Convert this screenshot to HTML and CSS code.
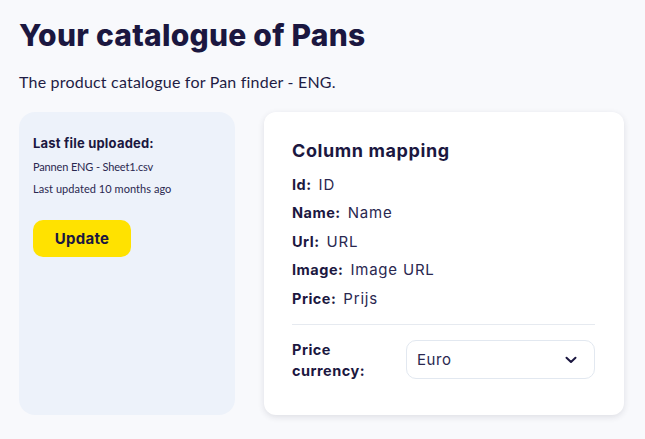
FILE: index.html
```html
<!DOCTYPE html>
<html>
<head>
<meta charset="utf-8">
<link rel="stylesheet" href="styles.css">
</head>
<body>
<main class="page">
  <h1 class="title">Your catalogue of Pans</h1>
  <p class="subtitle">The product catalogue for Pan finder - ENG.</p>
  <div class="cards">
    <section class="upload-card">
      <h2 class="upload-heading">Last file uploaded:</h2>
      <p class="upload-file">Pannen ENG - Sheet1.csv</p>
      <p class="upload-date">Last updated 10 months ago</p>
      <button class="update-btn">Update</button>
    </section>
    <section class="mapping-card">
      <h2 class="mapping-heading">Column mapping</h2>
      <ul class="mapping-list">
        <li class="mapping-row"><span class="mapping-key">Id:</span><span class="mapping-val">ID</span></li>
        <li class="mapping-row"><span class="mapping-key">Name:</span><span class="mapping-val">Name</span></li>
        <li class="mapping-row"><span class="mapping-key">Url:</span><span class="mapping-val">URL</span></li>
        <li class="mapping-row"><span class="mapping-key">Image:</span><span class="mapping-val">Image URL</span></li>
        <li class="mapping-row"><span class="mapping-key">Price:</span><span class="mapping-val">Prijs</span></li>
      </ul>
      <div class="currency">
        <label class="currency-label">Price<br>currency:</label>
        <div class="select">
          <span class="select-value">Euro</span>
          <svg class="chevron" width="12" height="8" viewBox="0 0 12 8"><path d="M1.5 1.8 L6 6 L10.5 1.8" fill="none" stroke="#1b1740" stroke-width="2" stroke-linecap="round" stroke-linejoin="round"/></svg>
        </div>
      </div>
    </section>
  </div>
</main>
</body>
</html>
```
FILE: styles.css
```css
* { box-sizing: border-box; }
html, body { margin: 0; padding: 0; }
body {
  background: #f8f9fc;
  color: #1b1740;
  font-family: "Open Sans", sans-serif;
  width: 645px;
  height: 439px;
  overflow: hidden;
}
.page {
  padding: 17px 21px 0 19px;
}
.title {
  margin: 0;
  font-family: "Inter", sans-serif;
  font-weight: 800;
  font-size: 30px;
  line-height: 36px;
  letter-spacing: 0.25px;
  color: #1b1740;
}
.subtitle {
  margin: 18px 0 0;
  font-family: "Lato", sans-serif;
  font-size: 16px;
  line-height: 22px;
  letter-spacing: 0.2px;
  color: #1f1d45;
}
.cards {
  display: flex;
  gap: 29px;
  margin-top: 19px;
  align-items: stretch;
}
.upload-card {
  width: 216px;
  height: 303px;
  background: #edf2fa;
  border-radius: 16px;
  padding: 23px 14px;
}
.upload-heading {
  margin: 0;
  font-family: "Inter", sans-serif;
  font-weight: 700;
  font-size: 13px;
  line-height: 16px;
  letter-spacing: 0.2px;
}
.upload-file, .upload-date {
  margin: 0;
  font-family: "Lato", sans-serif;
  font-size: 11px;
  line-height: 14px;
  color: #2a2850;
}
.upload-file { margin-top: 9px; letter-spacing: -0.15px; }
.upload-date { margin-top: 8px; letter-spacing: 0.05px; }
.update-btn {
  margin-top: 24px;
  width: 98px;
  height: 37px;
  border: none;
  border-radius: 10px;
  background: #ffe200;
  color: #1b1740;
  font-family: "Inter", sans-serif;
  font-weight: 700;
  font-size: 15px;
  letter-spacing: 0.3px;
  padding: 0;
}
.mapping-card {
  width: 360px;
  height: 303px;
  background: #fff;
  border-radius: 12px;
  box-shadow: 0 2px 6px rgba(30, 30, 60, 0.12);
  padding: 28px 29px 0 28px;
}
.mapping-heading {
  margin: 0;
  font-family: "Inter", sans-serif;
  font-weight: 700;
  font-size: 18px;
  line-height: 22px;
  letter-spacing: 0.6px;
}
.mapping-list {
  list-style: none;
  margin: 8px 0 0;
  padding: 0 0 11px;
  border-bottom: 1px solid #e6eaf0;
}
.mapping-row {
  height: 28.5px;
  display: flex;
  align-items: center;
  gap: 7px;
}
.mapping-key {
  font-family: "Inter", sans-serif;
  font-weight: 700;
  font-size: 14.5px;
  letter-spacing: 0.5px;
}
.mapping-val {
  font-family: "Inter", sans-serif;
  font-weight: 400;
  font-size: 15px;
  letter-spacing: 0.8px;
  color: #2a2850;
}
.currency {
  display: flex;
  align-items: center;
  margin-top: 14px;
}
.currency-label {
  width: 114px;
  font-family: "Inter", sans-serif;
  font-weight: 700;
  font-size: 14.5px;
  line-height: 21px;
  letter-spacing: 0.5px;
}
.select {
  flex: 1;
  height: 39px;
  border: 1px solid #e2e8f0;
  border-radius: 10px;
  display: flex;
  align-items: center;
  justify-content: space-between;
  padding: 0 17px 0 10px;
}
.select-value {
  font-family: "Inter", sans-serif;
  font-size: 15px;
  letter-spacing: 0.6px;
  color: #2a2850;
}
.chevron { display: block; }
```
